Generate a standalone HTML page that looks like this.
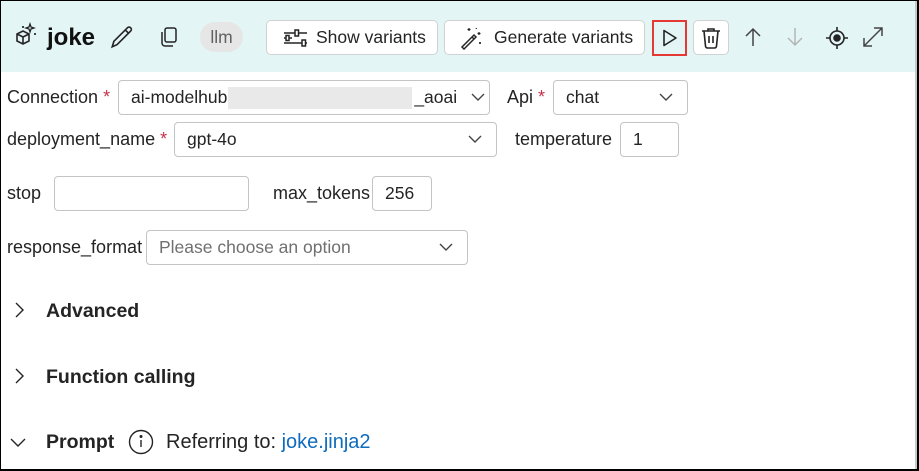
<!DOCTYPE html>
<html><head><style>
*{box-sizing:border-box;margin:0;padding:0}
body{width:919px;height:471px;overflow:hidden;background:#fff;font-family:"Liberation Sans",sans-serif;color:#242424;position:relative}
.a{position:absolute}
.frame{left:0;top:0;width:919px;height:471px;border:1px solid #000;border-bottom:2px solid #000;border-right:2px solid #000}
.hdr{left:1px;top:1px;width:914px;height:71px;background:#e3f5f5}
.btn{position:absolute;top:20px;height:35px;background:#fff;border:1px solid #d1d1d1;border-radius:5px;font-size:17px;display:flex;align-items:center}
.lbl{position:absolute;font-size:18px;color:#242424}
.sel{position:absolute;height:35px;border:1px solid #c4c4c4;border-radius:4px;background:#fff;font-size:17.5px;display:flex;align-items:center;padding-left:12px}
.chev{position:absolute;right:14px;top:11px}
.req{color:#c4314b}
.sec{position:absolute;left:46px;font-size:19.5px;font-weight:bold}
</style></head><body>
<div class="a hdr"></div>
<div class="a" style="left:915px;top:1px;width:2px;height:468px;background:#c8c8c8"></div>
<div class="a frame"></div>

<svg class="a" style="left:14px;top:22px" width="24" height="26" viewBox="0 0 24 26" fill="none" stroke="#242424" stroke-width="1.6"><path d="M3 12l6-3 6 3v7l-6 3-6-3z M3 12l6 3 6-3 M9 15v7"/><path d="M16 2l1 3 3 1-3 1-1 3-1-3-3-1 3-1z" stroke-width="1.3"/><path d="M21 11v2M20 12h2M9 4v2M8 5h2" stroke-width="1.2"/></svg>
<div class="a" style="left:47px;top:24px;font-size:24px;font-weight:bold;color:#111">joke</div>
<svg class="a" style="left:109px;top:24px" width="26" height="26" viewBox="0 0 24 24" fill="none" stroke="#242424" stroke-width="1.5"><path d="M3 21l1.5-5L17 3.5a2.1 2.1 0 013 3L7.5 19z M15 5.5l3 3"/></svg>
<svg class="a" style="left:160px;top:27px" width="18" height="21" viewBox="0 0 18 21" fill="none" stroke="#242424" stroke-width="1.5"><rect x="5" y="1" width="11" height="14" rx="2"/><path d="M2 5v11a3 3 0 003 3h8"/></svg>
<div class="a" style="left:200px;top:22px;width:43px;height:30px;border-radius:15px;background:#e6e6e6;color:#616161;font-size:17.5px;display:flex;align-items:center;justify-content:center">llm</div>

<div class="btn" style="left:266px;width:172px"><svg style="margin-left:16px" width="24" height="20" viewBox="0 0 24 20" fill="none" stroke="#242424" stroke-width="1.5"><path d="M1 5h23M1 15h23"/><rect x="12" y="2" width="3.5" height="6" fill="#fff"/><rect x="19" y="12" width="3.5" height="6" fill="#fff"/><path d="M1 10h8"/><rect x="3" y="7.5" width="3" height="5" fill="#fff"/></svg><span style="margin-left:9px;font-size:17.5px">Show variants</span></div>
<div class="btn" style="left:444px;width:201px"><svg style="margin-left:14px" width="24" height="24" viewBox="0 0 24 24" fill="none" stroke="#242424" stroke-width="1.5"><path d="M3 21l2 2 12-12-2-2z M13 11l2 2"/><path d="M10 2v3M8.5 3.5h3M20 6v3M18.5 7.5h3M21 16v2M20 17h2M17 2l.5 1" stroke-width="1.2"/></svg><span style="margin-left:11px;font-size:17.5px">Generate variants</span></div>
<div class="a" style="left:652px;top:20px;width:35px;height:36px;border:2px solid #e53935;display:flex;align-items:center;justify-content:center"><svg width="16" height="18" viewBox="0 0 16 18" fill="none" stroke="#242424" stroke-width="1.6"><path d="M2 1.5v15l12-7.5z" stroke-linejoin="round"/></svg></div>
<div class="btn" style="left:693px;width:36px;justify-content:center"><svg width="20" height="22" viewBox="0 0 20 22" fill="none" stroke="#242424" stroke-width="1.6"><path d="M1 4h18M7 4V2h6v2M3 4l1.5 15a2 2 0 002 2h7a2 2 0 002-2L17 4M8 9v7M12 9v7"/></svg></div>
<svg class="a" style="left:744px;top:27px" width="18" height="20" viewBox="0 0 18 20" fill="none" stroke="#444" stroke-width="1.5"><path d="M9 19V2M2 9l7-7 7 7"/></svg>
<svg class="a" style="left:786px;top:27px" width="18" height="20" viewBox="0 0 18 20" fill="none" stroke="#b5b5b5" stroke-width="1.5"><path d="M9 1v17M2 11l7 7 7-7"/></svg>
<svg class="a" style="left:825px;top:26px" width="24" height="24" viewBox="0 0 24 24" fill="none" stroke="#242424" stroke-width="1.6"><circle cx="12" cy="12" r="7"/><circle cx="12" cy="12" r="3" fill="#242424"/><path d="M12 1v4M12 19v4M1 12h4M19 12h4"/></svg>
<svg class="a" style="left:862px;top:26px" width="22" height="22" viewBox="0 0 22 22" fill="none" stroke="#444" stroke-width="1.5"><path d="M2 20L20 2M12 2h8v8M2 12v8h8"/></svg>

<div class="lbl" style="left:7px;top:87px">Connection <span class="req">*</span></div>
<div class="sel" style="left:118px;top:80px;width:372px">ai-modelhub<span style="display:inline-block;width:184px;height:22px;background:#e9e9e9;margin:0 2px 0 1px"></span>_aoai<svg class="chev" width="14" height="10" viewBox="0 0 14 10" fill="none" stroke="#444" stroke-width="1.4" style="right:4px"><path d="M1 2l6 6 6-6"/></svg></div>
<div class="lbl" style="left:507px;top:87px">Api <span class="req">*</span></div>
<div class="sel" style="left:553px;top:80px;width:135px">chat<svg class="chev" width="14" height="10" viewBox="0 0 14 10" fill="none" stroke="#444" stroke-width="1.4"><path d="M1 2l6 6 6-6"/></svg></div>

<div class="lbl" style="left:7px;top:129px">deployment_name <span class="req">*</span></div>
<div class="sel" style="left:174px;top:122px;width:323px">gpt-4o<svg class="chev" width="14" height="10" viewBox="0 0 14 10" fill="none" stroke="#444" stroke-width="1.4"><path d="M1 2l6 6 6-6"/></svg></div>
<div class="lbl" style="left:515px;top:129px">temperature</div>
<div class="sel" style="left:620px;top:122px;width:59px">1</div>

<div class="lbl" style="left:7px;top:183px">stop</div>
<div class="sel" style="left:54px;top:176px;width:195px"></div>
<div class="lbl" style="left:273px;top:183px">max_tokens</div>
<div class="sel" style="left:372px;top:176px;width:60px">256</div>

<div class="lbl" style="left:7px;top:237px">response_format</div>
<div class="sel" style="left:146px;top:230px;width:322px;color:#707070">Please choose an option<svg class="chev" width="14" height="10" viewBox="0 0 14 10" fill="none" stroke="#444" stroke-width="1.4"><path d="M1 2l6 6 6-6"/></svg></div>

<svg class="a" style="left:14px;top:302px" width="10" height="16" viewBox="0 0 10 16" fill="none" stroke="#242424" stroke-width="1.4"><path d="M2 1l7 7-7 7"/></svg>
<div class="sec" style="top:300px">Advanced</div>
<svg class="a" style="left:14px;top:368px" width="10" height="16" viewBox="0 0 10 16" fill="none" stroke="#242424" stroke-width="1.4"><path d="M2 1l7 7-7 7"/></svg>
<div class="sec" style="top:366px">Function calling</div>
<svg class="a" style="left:10px;top:437px" width="16" height="10" viewBox="0 0 16 10" fill="none" stroke="#242424" stroke-width="1.4"><path d="M1 2l7 7 7-7"/></svg>
<div class="sec" style="top:431px">Prompt</div>
<svg class="a" style="left:128px;top:429px" width="26" height="26" viewBox="0 0 26 26" fill="none" stroke="#242424" stroke-width="1.4"><circle cx="13" cy="13" r="11.5"/><path d="M13 11v7"/><circle cx="13" cy="7.5" r="0.8" fill="#242424"/></svg>
<div class="a" style="left:166px;top:431px;font-size:20px">Referring to: <span style="color:#0f6cbd">joke.jinja2</span></div>
</body></html>
